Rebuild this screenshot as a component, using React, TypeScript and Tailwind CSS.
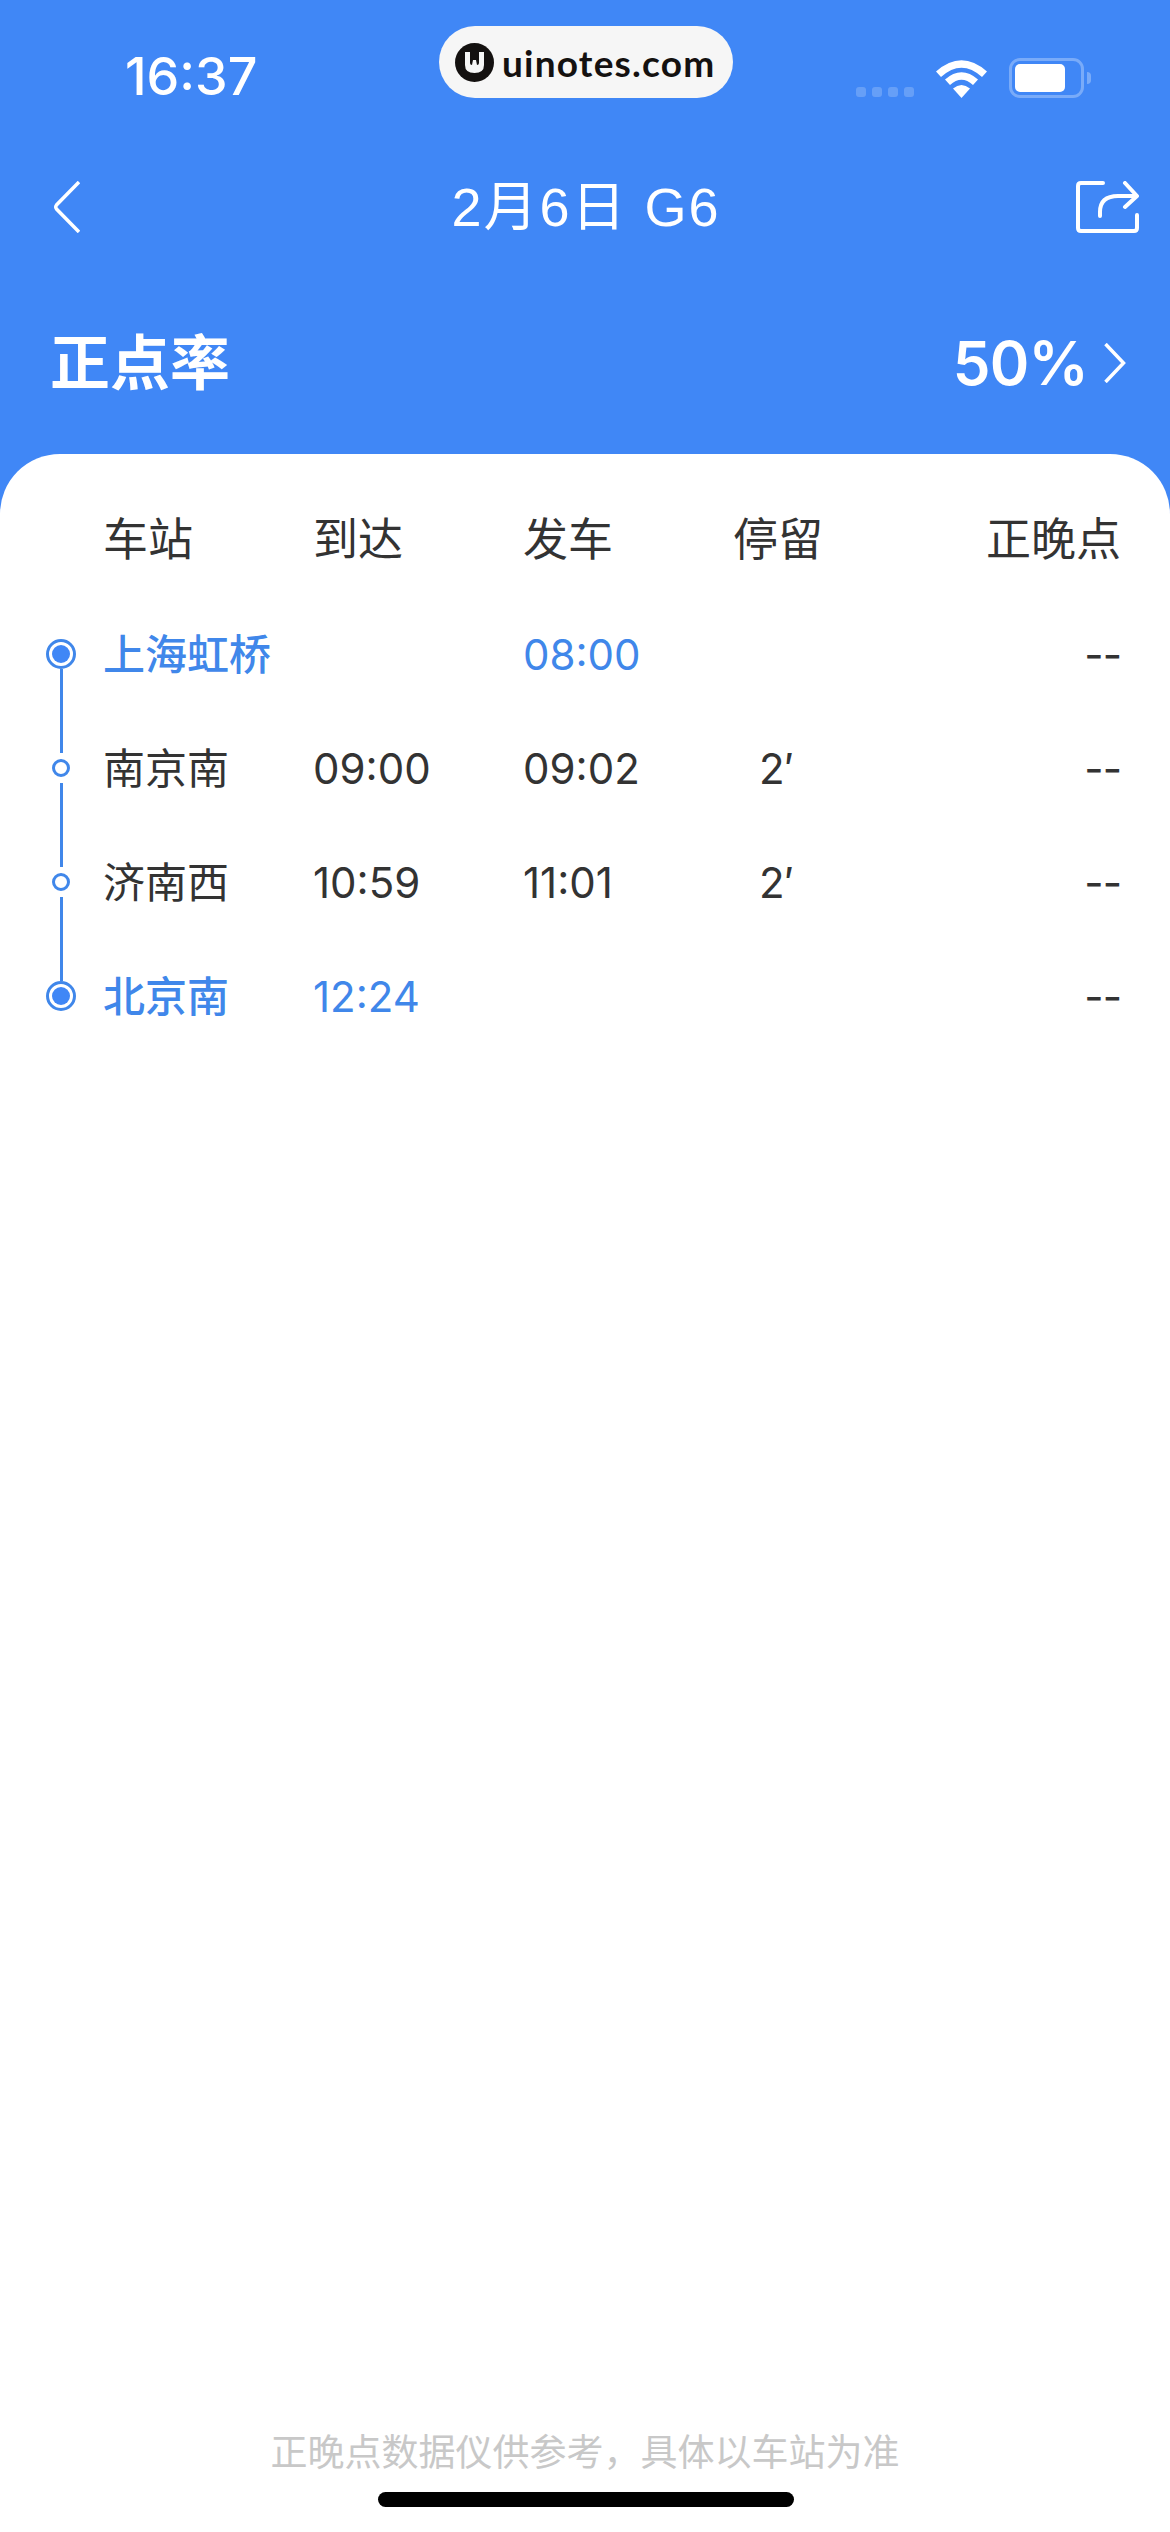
const stops = [
  { name: '上海虹桥', arrive: '', depart: '08:00', stay: '', major: true, first: true, last: false },
  { name: '南京南', arrive: '09:00', depart: '09:02', stay: '2′', major: false, first: false, last: false },
  { name: '济南西', arrive: '10:59', depart: '11:01', stay: '2′', major: false, first: false, last: false },
  { name: '北京南', arrive: '12:24', depart: '', stay: '', major: true, first: false, last: true },
];

function StatusIcons() {
  return (
    <div className="flex items-end">
      <div className="flex gap-[6px] mb-[1px]">
        {[0, 1, 2, 3].map((i) => (
          <div key={i} className="w-[10px] h-[10px] rounded-[3px] bg-white/20" />
        ))}
      </div>
      <svg width="51" height="38" viewBox="0 0 51 38" className="ml-[22px]">
        <path d="M25.5 38 L17 28.5 Q25.5 21.5 34 28.5 Z" fill="#fff" />
        <path d="M9 19.5 Q25.5 5 42 19.5 L37 25 Q25.5 14.5 14 25 Z" fill="#fff" />
        <path d="M0 11.5 Q25.5 -11 51 11.5 L46 17 Q25.5 -1.5 5 17 Z" fill="#fff" />
      </svg>
      <div className="flex items-center ml-[22px]">
        <div className="w-[75px] h-[40px] rounded-[11px] border-[3px] border-white/30 p-[3px]">
          <div className="w-[50px] h-full rounded-[5px] bg-white" />
        </div>
        <div className="w-[4px] h-[12px] ml-[3px] rounded-r-[4px] bg-white/30" />
      </div>
    </div>
  );
}

function Marker({ major, first, last }: { major: boolean; first: boolean; last: boolean }) {
  return (
    <div className="w-[30px] h-full ml-[46px] mr-[27px] flex flex-col items-center">
      <div className={`flex-1 w-[3px] ${first ? '' : 'bg-[#4087ea]'} ${major ? '' : 'mb-[6px]'}`} />
      {major ? (
        <div className="w-[30px] h-[30px] rounded-full border-[3px] border-[#4087ea] p-[3px]">
          <div className="w-full h-full rounded-full bg-[#4087f6]" />
        </div>
      ) : (
        <div className="w-[18px] h-[18px] rounded-full border-[3px] border-[#4087ea]" />
      )}
      <div className={`flex-1 w-[3px] ${last ? '' : 'bg-[#4087ea]'} ${major ? '' : 'mt-[6px]'}`} />
    </div>
  );
}

export default function App() {
  return (
    <div className="w-[1170px] h-[2532px] flex flex-col bg-[#4087f6] font-['Inter','Noto_Sans_CJK_SC',sans-serif] overflow-hidden">
      <div className="h-[454px] shrink-0 text-white">
        <div className="h-[112px] pt-[26px] pl-[125px] pr-[79px] flex items-start">
          <div className="w-[314px] pt-[24px] text-[52px] leading-[54px] font-medium">16:37</div>
          <div className="w-[294px] h-[72px] rounded-[36px] bg-[#f6f6f6] flex items-center pl-[16px]">
            <svg width="39" height="39" viewBox="0 0 39 39">
              <circle cx="19.5" cy="19.5" r="19.5" fill="#141110" />
              <path d="M10 9h5v11q0 2 2 2l1-5h3l1 5q2 0 2-2V9h5v13q0 8-9.5 8T10 22Z" fill="#f6f6f6" />
            </svg>
            <span className="ml-[8px] text-[37px] leading-none font-bold text-[#141110] font-['Lato',sans-serif] tracking-[1.2px]">uinotes.com</span>
          </div>
          <div className="flex-1 flex justify-end pt-[32px]">
            <StatusIcons />
          </div>
        </div>
        <div className="h-[190px] pl-[54px] pr-[31px] flex items-start justify-between">
          <svg width="26" height="52" viewBox="0 0 26 52" className="mt-[69px]" fill="none" stroke="#fff" strokeWidth="3.5">
            <path d="M25 1 L2.5 24 Q1 26 2.5 28 L25 51" />
          </svg>
          <div className="mt-[65px] ml-[16px] text-[54px] leading-[60px] tracking-[2px] font-['Liberation_Sans','Noto_Sans_CJK_SC',sans-serif]">2月6日 G6</div>
          <svg width="63" height="52" viewBox="0 0 63 52" className="mt-[69px]" fill="none" stroke="#fff" strokeWidth="4" strokeLinecap="round" strokeLinejoin="round">
            <path d="M27 2 H5 Q2 2 2 5 V47 Q2 50 5 50 H58 Q61 50 61 47 V34" />
            <path d="M24 35 V31 Q24 15 42 15 H60" />
            <path d="M49 2 L61 15 L49 26" />
          </svg>
        </div>
        <div className="h-[152px] pl-[50px] pr-[44px] flex items-start justify-between">
          <div className="mt-[21px] text-[60px] leading-[80px] font-bold">正点率</div>
          <div className="flex items-center mt-[21px] h-[80px]">
            <span className="text-[60px] leading-[80px] font-semibold tracking-[-0.8px]">50%</span>
            <svg width="22" height="40" viewBox="0 0 22 40" className="ml-[16px]" fill="none" stroke="#fff" strokeWidth="3.5">
              <path d="M1.5 1 L19.5 20 L1.5 39" />
            </svg>
          </div>
        </div>
      </div>

      <div className="flex-1 flex flex-col bg-white rounded-t-[60px] text-[#333333] text-[42px]">
        <div className="h-[143px] pt-[28px] pl-[103px] pr-[49px] flex items-center text-[45px]">
          <div className="w-[210px]">车站</div>
          <div className="w-[210px]">到达</div>
          <div className="w-[210px]">发车</div>
          <div className="w-[210px]">停留</div>
          <div className="flex-1 text-right">正晚点</div>
        </div>
        {stops.map((s) => (
          <div key={s.name} className={`h-[114px] pr-[49px] flex items-center ${s.major ? 'text-[#4087ea]' : ''}`}>
            <Marker major={s.major} first={s.first} last={s.last} />
            <div className={`w-[210px] ${s.major ? 'font-medium' : ''}`}>{s.name}</div>
            <div className="w-[210px]">{s.arrive}</div>
            <div className="w-[210px]">{s.depart}</div>
            <div className="w-[210px] pl-[26px] text-[#333333]">{s.stay}</div>
            <div className="flex-1 text-right text-[#333333] tracking-[-1px]">--</div>
          </div>
        ))}
        <div className="flex-1" />
        <div className="text-center text-[37px] leading-[50px] text-[#c8c8c8]">正晚点数据仪供参考，具体以车站为准</div>
        <div className="h-[15px] w-[416px] ml-[378px] mt-[14px] mb-[25px] rounded-full bg-black" />
      </div>
    </div>
  );
}
